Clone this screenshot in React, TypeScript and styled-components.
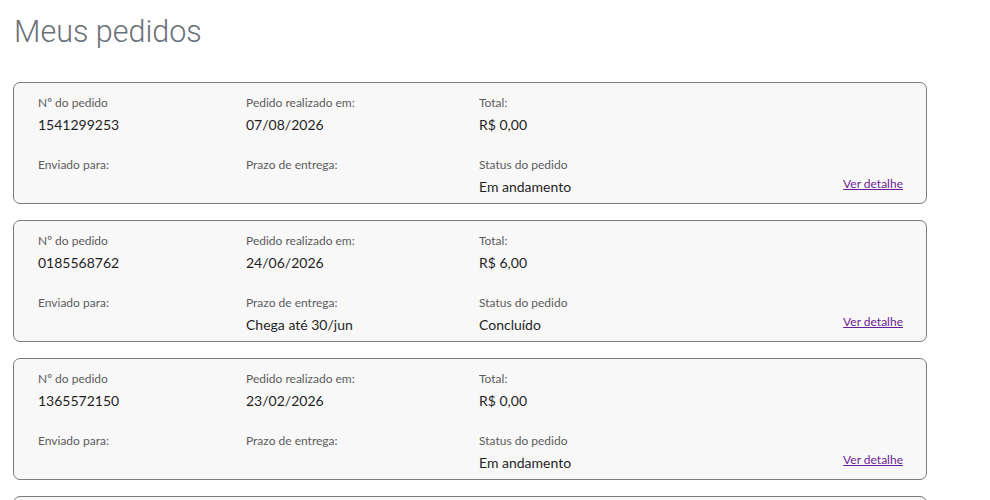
import React from 'react';
import styled, {createGlobalStyle} from 'styled-components';

const GlobalStyle = createGlobalStyle`
	body {
		margin: 0;
		background: #fff;
		font-family: Lato, 'Open Sans', sans-serif;
	}
`;

const Page = styled.div`
	padding: 0 13px;
`;

const Title = styled.h1`
	margin: 0;
	padding: 12px 0 0 1px;
	font-family: Roboto, sans-serif;
	font-weight: 300;
	font-size: 30.5px;
	line-height: 40px;
	color: #6b6f77;
`;

const List = styled.div`
	display: flex;
	flex-direction: column;
	gap: 16px;
	margin-top: 30px;
	width: 914px;
`;

const Card = styled.div`
	box-sizing: border-box;
	height: 122px;
	border: 1px solid #7a7a7a;
	border-radius: 7px;
	background: #f8f8f8;
	padding: 12px 23px 6px 24px;
	display: grid;
	grid-template-columns: 208px 233px 1fr auto;
	grid-template-rows: 40px 40px;
	row-gap: 22px;
`;

const Cell = styled.div`
	display: flex;
	flex-direction: column;
`;

const Label = styled.span`
	font-size: 12px;
	line-height: 16px;
	color: #5c5c5c;
`;

const Value = styled.span`
	margin-top: 4px;
	font-size: 14px;
	line-height: 20px;
	color: #1f1f1f;
	min-height: 20px;
`;

const DetailLink = styled.a`
	grid-column: 4;
	grid-row: 2;
	align-self: end;
	margin-bottom: 5px;
	font-size: 12px;
	line-height: 16px;
	color: #6b1d96;
	text-decoration: underline;
	cursor: pointer;
`;

type Order = {
	id: string;
	date: string;
	total: string;
	deadline: string;
	status: string;
};

const orders: Order[] = [
	{id: '1541299253', date: '07/08/2026', total: 'R$ 0,00', deadline: '', status: 'Em andamento'},
	{id: '0185568762', date: '24/06/2026', total: 'R$ 6,00', deadline: 'Chega até 30/jun', status: 'Concluído'},
	{id: '1365572150', date: '23/02/2026', total: 'R$ 0,00', deadline: '', status: 'Em andamento'},
	{id: '1365572150', date: '23/02/2026', total: 'R$ 0,00', deadline: '', status: 'Em andamento'},
];

const Field: React.FC<{label: string; value?: string}> = ({label, value}) => (
	<Cell>
		<Label>{label}</Label>
		<Value>{value}</Value>
	</Cell>
);

const OrderCard: React.FC<{order: Order}> = ({order}) => (
	<Card>
		<Field label="Nº do pedido" value={order.id} />
		<Field label="Pedido realizado em:" value={order.date} />
		<Field label="Total:" value={order.total} />
		<span />
		<Field label="Enviado para:" />
		<Field label="Prazo de entrega:" value={order.deadline} />
		<Field label="Status do pedido" value={order.status} />
		<DetailLink>Ver detalhe</DetailLink>
	</Card>
);

const App: React.FC = () => (
	<>
		<GlobalStyle />
		<Page>
			<Title>Meus pedidos</Title>
			<List>
				{orders.map((order, i) => (
					<OrderCard key={i} order={order} />
				))}
			</List>
		</Page>
	</>
);

export default App;
